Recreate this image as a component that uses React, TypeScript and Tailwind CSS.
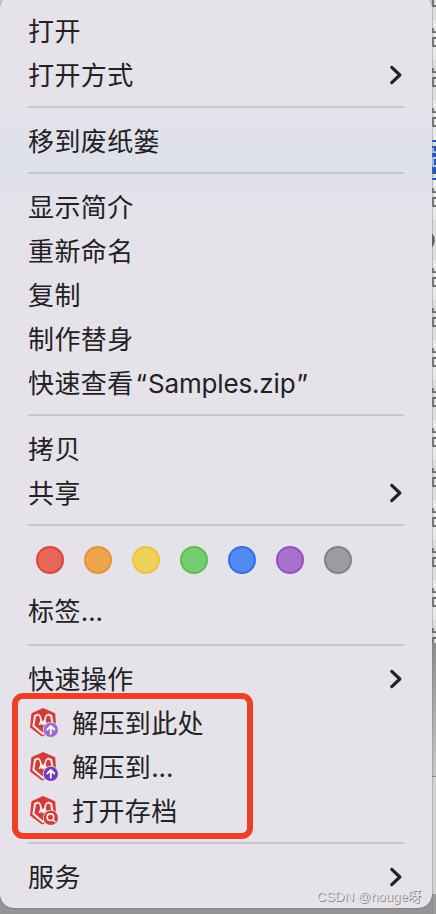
import type { ReactNode } from "react";

type BadgeKind = "here" | "to" | "open";

const tags = [
  { name: "red", color: "border-[#e0453a] bg-[#e7665a]" },
  { name: "orange", color: "border-[#e69138] bg-[#eaa54e]" },
  { name: "yellow", color: "border-[#ecc545] bg-[#efd058]" },
  { name: "green", color: "border-[#5bc04f] bg-[#74cd70]" },
  { name: "blue", color: "border-[#2f6eed] bg-[#508bf2]" },
  { name: "purple", color: "border-[#9450c1] bg-[#a872cc]" },
  { name: "gray", color: "border-[#828186] bg-[#9c9b9f]" },
];

const badgeColors: Record<BadgeKind, string> = {
  here: "#9a6bd3",
  to: "#7338bf",
  open: "#cf3f3c",
};

function ArchiveIcon({ kind }: { kind: BadgeKind }) {
  return (
    <svg viewBox="0 0 30 30" className="-mt-0.5 size-[30px] shrink-0" fill="none" aria-hidden="true">
      <path d="M15 1 27.2 6.2 28 18 15.4 29.2 13.6 29.2 2 20.4 3.4 6.2Z" fill="#d23c39" />
      <path
        d="M10.6 7.4 7 8.8 5.4 18.8 15 27 19 23.6M19.4 7.4 23.2 8.8 24.8 18"
        stroke="#f8e9ec"
        strokeWidth="2"
      />
      <path
        d="M10.6 7.6Q13 9.4 13 14.2L11.4 18M19.4 7.6Q17 9.4 17 14.2L18.6 18"
        stroke="#f8e9ec"
        strokeWidth="1.7"
      />
      <path d="M12.2 11.8 15 14 17.8 11.8 18 16.2 15 18.4 12 16.2Z" fill="#f8e9ec" />
      <circle cx="22.8" cy="22.8" r="8" fill="#e5e2e9" />
      <circle cx="22.8" cy="22.8" r="7.2" fill={badgeColors[kind]} />
      {kind === "open" ? (
        <g stroke="#f8e9ec" strokeWidth="1.6" strokeLinecap="round">
          <circle cx="22.4" cy="22.2" r="3.3" />
          <path d="m25 24.8 2 2" />
        </g>
      ) : (
        <path
          d="M22.8 26.8V19.2M19.3 22.5l3.5-3.5 3.5 3.5"
          stroke="#fff"
          strokeWidth="1.8"
          strokeLinecap="round"
          strokeLinejoin="round"
        />
      )}
    </svg>
  );
}

function MenuItem({
  children,
  icon,
  submenu = false,
}: {
  children: ReactNode;
  icon?: BadgeKind;
  submenu?: boolean;
}) {
  return (
    <div role="menuitem" className="flex h-11 shrink-0 items-center pr-[30px] pl-7">
      {icon ? (
        <span className="mr-3.5 flex">
          <ArchiveIcon kind={icon} />
        </span>
      ) : null}
      <span className="grow pt-px leading-[44px] whitespace-nowrap">{children}</span>
      {submenu ? (
        <svg viewBox="0 0 14 20" className="h-5 w-3.5" fill="none" aria-hidden="true">
          <path
            d="m3.8 2.4 8 7.6-8 7.6"
            stroke="#222124"
            strokeWidth="3.2"
            strokeLinecap="round"
            strokeLinejoin="round"
          />
        </svg>
      ) : null}
    </div>
  );
}

/** Latin letters and dots sit tighter than the Chinese text around them. */
function Latin({ children }: { children: ReactNode }) {
  return <span className="tracking-[-0.15px]">{children}</span>;
}

function Separator() {
  return (
    <div role="separator" className="h-[22px] shrink-0 px-7 pt-[9px]">
      <div className="h-0.5 bg-[#c9c6d0]" />
    </div>
  );
}

/** Sliver of the file list that shows past the menu's right edge. */
function FileListEdge() {
  const rows = Array.from({ length: 17 }, (_, i) => i);
  return (
    <svg viewBox="0 0 4 914" className="h-[914px] w-1 shrink-0" fill="none" aria-hidden="true">
      <defs>
        <linearGradient id="window-shade" x1="0" y1="0" x2="0" y2="1">
          <stop offset="0" stopColor="#8b8a8c" />
          <stop offset="1" stopColor="#c6c5c7" />
        </linearGradient>
      </defs>
      <rect width="4" height="914" fill="#e9e9e9" />
      {rows.map((i) => (
        <g key={i} transform={`translate(0 ${i * 40 - 20})`}>
          {i % 2 === 0 ? <rect width="4" height="40" fill="#dfdfdf" /> : null}
          {i === 4 ? (
            <>
              <rect width="4" height="2" fill="#2858bd" />
              <rect y="6" width="4" height="28" fill="#2858bd" />
              <rect y="38" width="4" height="2" fill="#2858bd" />
            </>
          ) : null}
          {i === 6 ? (
            <path d="M0 13Q5.5 20 0 28Z" fill="#5b5b5b" />
          ) : (
            <path
              d="M0 12.2h4M1 8v5M4 18H1v8h3"
              stroke={i === 4 ? "#b8c9ed" : "#6c6c6c"}
              strokeWidth="1.8"
            />
          )}
        </g>
      ))}
      <rect y="643" width="4" height="133" fill="url(#window-shade)" />
      <rect y="776" width="4" height="1" fill="#858585" />
      <rect y="777" width="4" height="117" fill="#d2d2d2" />
      <rect y="894" width="4" height="20" fill="#9b9b9b" />
      <rect width="1" height="914" fill="#777" fillOpacity="0.35" />
    </svg>
  );
}

export default function App() {
  return (
    <div className="relative flex h-[914px] w-[436px] overflow-hidden bg-[#999] font-['Inter','Noto_Sans_CJK_SC',sans-serif] text-[26px] tracking-[0.4px] text-[#222124]">
      <div className="flex w-[432px] shrink-0 flex-col bg-linear-to-b from-[#dcdcdc] from-80% to-[#939393]">
        <div
          role="menu"
          className="-mt-1.5 flex h-[914px] flex-col rounded-[14px] bg-[#e5e2e9] bg-linear-to-b from-[#e5e2e9] from-11% via-[#dee1ea] via-18% to-[#e5e2e9] to-25% pt-[15px] shadow-[0_0_2px_#555]"
        >
          <MenuItem>打开</MenuItem>
          <MenuItem submenu>打开方式</MenuItem>
          <Separator />
          <MenuItem>移到废纸篓</MenuItem>
          <Separator />
          <MenuItem>显示简介</MenuItem>
          <MenuItem>重新命名</MenuItem>
          <MenuItem>复制</MenuItem>
          <MenuItem>制作替身</MenuItem>
          <MenuItem>
            快速查看
            <Latin>
              <span className="mr-px ml-0.5">“</span>
              Samples.zip
              <span className="ml-px">”</span>
            </Latin>
          </MenuItem>
          <Separator />
          <MenuItem>拷贝</MenuItem>
          <MenuItem submenu>共享</MenuItem>
          <Separator />
          <div className="flex h-[52px] shrink-0 gap-5 pt-[9px] pl-9">
            {tags.map((tag) => (
              <span key={tag.name} className={`size-7 rounded-full border-2 ${tag.color}`} />
            ))}
          </div>
          <MenuItem>
            标签<Latin>...</Latin>
          </MenuItem>
          <div className="h-0.5 shrink-0" />
          <Separator />
          <MenuItem submenu>快速操作</MenuItem>
          <MenuItem icon="here">解压到此处</MenuItem>
          <MenuItem icon="to">
            解压到<Latin>...</Latin>
          </MenuItem>
          <MenuItem icon="open">打开存档</MenuItem>
          <Separator />
          <MenuItem submenu>服务</MenuItem>
        </div>
      </div>
      <FileListEdge />

      {/* Highlight around the archive actions */}
      <div className="absolute top-[693px] left-3 h-[146px] w-[241px] rounded-[11px] border-6 border-[#ee4027]" />
      <span className="absolute right-[15px] bottom-2 font-['Liberation_Sans','Noto_Sans_CJK_SC',sans-serif] text-[13.3px] leading-[18px] tracking-[-0.05px] whitespace-nowrap text-[#e6e4e8] [text-shadow:1px_1px_0_#8a888c]">
        CSDN @houge呀
      </span>
    </div>
  );
}
